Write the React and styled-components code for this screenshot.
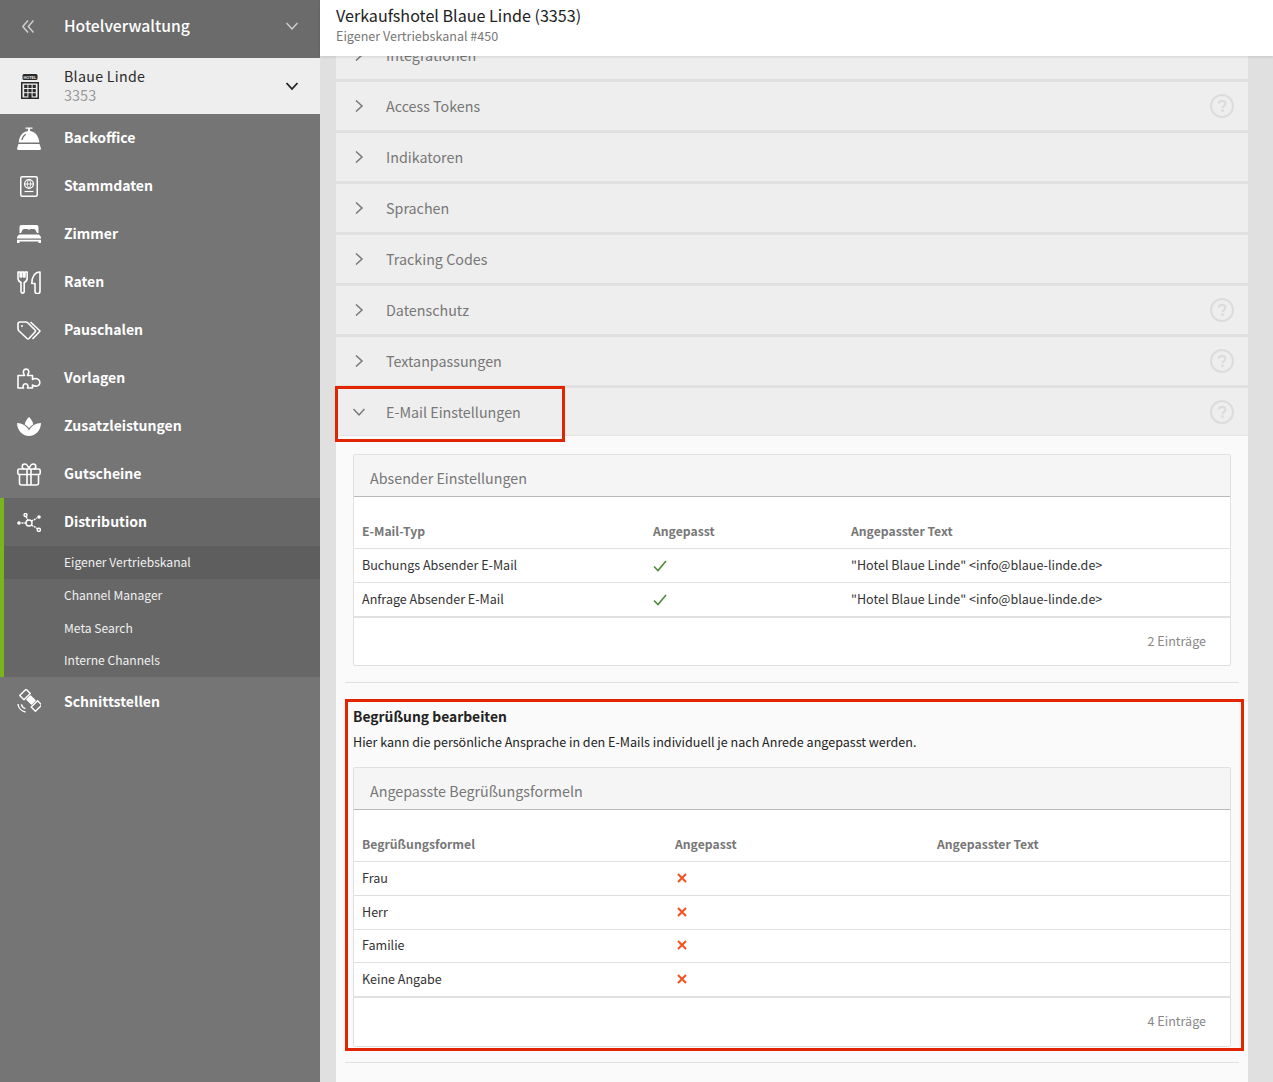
import React from "react";
import styled, { createGlobalStyle } from "styled-components";

const FONT = `"Noto Sans CJK SC", "Noto Sans", sans-serif`;

const Global = createGlobalStyle`
  html, body { margin: 0; padding: 0; height: 100%; overflow: hidden; }
  body { font-family: ${FONT}; background: #e0e0e0; }
  * { box-sizing: border-box; }
`;

const Page = styled.div`
  position: relative;
  display: flex;
  width: 1273px;
  height: 1082px;
  overflow: hidden;
`;

/* ---------- sidebar ---------- */
const Sidebar = styled.aside`
  flex: 0 0 320px;
  background: #757575;
  color: #fff;
  display: flex;
  flex-direction: column;
`;
const TopBar = styled.div`
  height: 58px;
  background: #6b6b6b;
  display: flex;
  align-items: center;
  padding-bottom: 6px;
`;
const TopTitle = styled.div`
  flex: 1;
  font-size: 15.7px;
  font-weight: 500;
  color: #fff;
  padding-bottom: 2px;
`;
const IconSlot = styled.div`
  flex: 0 0 ${(p) => p.$w || 64}px;
  display: flex;
  justify-content: flex-start;
  padding-left: ${(p) => p.$pl ?? 17}px;
  align-items: center;
`;
const HotelRow = styled.div`
  height: 56px;
  background: #eeeeee;
  display: flex;
  align-items: center;
  color: #222;
`;
const HotelText = styled.div`
  flex: 1;
  display: flex;
  flex-direction: column;
  padding-bottom: 2px;
`;
const HotelName = styled.div`
  font-size: 14.2px;
  line-height: 19px;
  letter-spacing: 0.3px;
  color: #2a2a2a;
`;
const HotelId = styled.div`
  font-size: 14.5px;
  line-height: 18px;
  color: #9a9a9a;
`;
const TailIcon = styled.div`
  flex: 0 0 42px;
  display: flex;
  padding-left: 8px;
`;
const NavItem = styled.div`
  height: 48px;
  display: flex;
  align-items: center;
  font-size: 14px;
  font-weight: 700;
  color: #fff;
`;
const NavLabel = styled.span`
  padding-bottom: ${(p) => (p.$flat ? 0 : 2)}px;
`;
const Group = styled.div`
  background: #676767;
  border-left: 4px solid #7ab51d;
`;
const SubItem = styled.div`
  height: ${(p) => (p.$h ? p.$h : 33)}px;
  padding-left: 60px;
  padding-bottom: 3px;
  display: flex;
  align-items: center;
  font-size: 12.1px;
  color: #f0f0f0;
  background: ${(p) => (p.$active ? "#5e5e5e" : "transparent")};
`;

/* ---------- main ---------- */
const Main = styled.main`
  flex: 1;
  min-width: 0;
  display: flex;
  flex-direction: column;
  background: #e0e0e0;
`;
const Header = styled.header`
  position: relative;
  z-index: 2;
  flex: 0 0 56px;
  background: #fff;
  padding: 4px 16px 0;
  box-shadow: 0 1px 3px rgba(0, 0, 0, 0.12);
`;
const HeaderTitle = styled.div`
  font-size: 16.1px;
  line-height: 22px;
  color: #222;
`;
const HeaderSub = styled.div`
  font-size: 12.55px;
  line-height: 18px;
  margin-top: 1px;
  color: #777;
`;
const Scroller = styled.div`
  flex: 1;
  overflow: hidden;
  padding: 0 25px 0 16px;
`;
const Accordion = styled.div`
  display: flex;
  flex-direction: column;
  gap: 3px;
  margin-top: -25px;
`;
const Row = styled.div`
  height: 48px;
  background: #eeeeee;
  display: flex;
  align-items: center;
  color: #777;
  font-size: 14.3px;
  padding: 0 14px 0 17px;
  border-bottom: ${(p) => (p.$open ? "1px solid #e4e4e4" : "none")};
`;
const RowArrow = styled.div`
  flex: 0 0 33px;
  display: flex;
  align-items: center;
`;
const RowLabel = styled.div`
  flex: 1;
  padding-bottom: ${(p) => (p.$open ? 0 : 2)}px;
`;
const Body = styled.div`
  margin-top: -3px;
  background: #fafafa;
  padding: 18px 9px 0;
  height: 700px;
`;
const Card = styled.section`
  margin: 0 8px;
  background: #fff;
  border: 1px solid #e0e0e0;
  border-radius: 2px;
`;
const CardHead = styled.div`
  height: 42px;
  background: #f5f5f5;
  border-bottom: 1px solid #b8b8b8;
  display: flex;
  align-items: center;
  padding: 3px 16px 0;
  font-size: 14.3px;
  color: #777;
`;
const GridRow = styled.div`
  display: grid;
  grid-template-columns: ${(p) => p.$cols};
  align-items: center;
  height: 33.75px;
  padding-left: 8px;
  font-size: 12.55px;
  color: #333;
  border-bottom: 1px solid #e0e0e0;
`;
const HeadRow = styled(GridRow)`
  height: 52px;
  padding-top: 18px;
  font-size: 12.2px;
  font-weight: 600;
  color: #777;
`;
const Cell = styled.span`
  display: block;
  padding-bottom: 2px;
`;
const IconCell = styled.span`
  display: flex;
  align-items: center;
  padding-top: ${(p) => p.$top || 0}px;
  padding-bottom: ${(p) => p.$bottom || 0}px;
  padding-left: ${(p) => p.$left || 0}px;
`;
const CardFoot = styled.div`
  height: 49.5px;
  border-top: 2px solid #e0e0e0;
  margin-top: -1px;
  display: flex;
  align-items: center;
  justify-content: flex-end;
  padding: 0 24px 2px 0;
  font-size: 12.55px;
  color: #888;
`;
const Divider = styled.hr`
  border: 0;
  border-top: 1px solid #e0e0e0;
  margin: 0;
  margin-top: ${(p) => p.$mt}px;
  width: 894px;
`;
const SubTitle = styled.h3`
  margin: 23px 0 0 8px;
  font-size: 13.85px;
  line-height: 20px;
  font-weight: 700;
  color: #222;
`;
const Paragraph = styled.p`
  margin: 6px 0 15px 8px;
  font-size: 12.55px;
  line-height: 20px;
  color: #222;
`;
const RedBox = styled.div`
  position: absolute;
  left: ${(p) => p.$x}px;
  top: ${(p) => p.$y}px;
  width: ${(p) => p.$w}px;
  height: ${(p) => p.$h}px;
  border: 3px solid #e32400;
  pointer-events: none;
`;

/* ---------- icons ---------- */
const Chevron = ({ dir = "right", color = "#777", size = 12, w = 1.5 }) => (
  <svg width={size} height={size} viewBox="0 0 12 12" fill="none" stroke={color} strokeWidth={w}>
    {dir === "right" ? <path d="M3 0.5 L9 6 L3 11.5" /> : <path d="M0.5 3 L6 9 L11.5 3" />}
  </svg>
);
const Doubles = () => (
  <svg width="12" height="13" viewBox="0 0 12 13" fill="none" stroke="#cfcfcf" strokeWidth="1.5">
    <path d="M6 0.5 L0.8 6.5 L6 12.5" />
    <path d="M11.5 0.5 L6.3 6.5 L11.5 12.5" />
  </svg>
);
const Help = () => (
  <svg width="24" height="24" viewBox="0 0 24 24" fill="none">
    <circle cx="12" cy="12" r="11" stroke="#dcdcdc" strokeWidth="2" />
    <path d="M8.6 9.6 C8.8 7.6 10.2 6.8 12 6.8 C14 6.8 15.4 8 15.4 9.7 C15.4 11.8 12.6 11.9 12.6 14" stroke="#dcdcdc" strokeWidth="2.2" />
    <rect x="11.2" y="15.3" width="2.6" height="2.6" fill="#dcdcdc" />
  </svg>
);
const Check = () => (
  <svg width="14" height="12" viewBox="0 0 14 12" fill="none" stroke="#4c8b3c" strokeWidth="1.6">
    <path d="M1 6.5 L5 10.5 L13 1" />
  </svg>
);
const Cross = () => (
  <svg width="10" height="10" viewBox="0 0 10 10" fill="none" stroke="#f4511e" strokeWidth="2">
    <path d="M1 1 L9 9 M9 1 L1 9" />
  </svg>
);
const HotelIcon = () => (
  <svg width="18" height="25" viewBox="0 0 18 25">
    <rect x="1.5" y="0" width="15" height="6" rx="1.5" fill="#2a2a2a" />
    <text x="9" y="4.6" fontSize="3.8" fontWeight="700" fill="#eee" textAnchor="middle" fontFamily="Liberation Sans, sans-serif">HOTEL</text>
    <rect x="0.75" y="8.75" width="16.5" height="15.5" fill="#eee" stroke="#2a2a2a" strokeWidth="1.5" />
    {[0, 1, 2].map((r) =>
      [0, 1, 2].map((c) =>
        r === 2 && c === 1 ? null : (
          <rect key={`${r}${c}`} x={3.2 + c * 4.2} y={10.8 + r * 4.2} width="3.2" height="3.2" fill="#2a2a2a" />
        )
      )
    )}
    <rect x="7.4" y="19.2" width="3.2" height="5" fill="#2a2a2a" />
  </svg>
);
const Bell = () => (
  <svg width="24" height="23" viewBox="0 0 24 23" fill="#fff">
    <path d="M8.5 0.5 H15.5 V1.8 H13 V4 C18.5 4.6 22 9.5 22.3 15.5 H1.7 C2 9.5 5.5 4.6 11 4 V1.8 H8.5 Z" />
    <path d="M5 13 C5.4 10.5 6.8 8.5 8.8 7.3" fill="none" stroke="#757575" strokeWidth="1.3" />
    <path d="M1.5 17 H22.5 L24 21.5 Q24 23 22.5 23 H1.5 Q0 23 0 21.5 Z" />
  </svg>
);
const Passport = () => (
  <svg width="18" height="21" viewBox="0 0 18 21" fill="none" stroke="#fff">
    <rect x="0.75" y="0.75" width="16.5" height="19.5" rx="1.5" strokeWidth="1.5" />
    <circle cx="9" cy="8" r="4.4" strokeWidth="1.3" />
    <path d="M4.6 8 H13.4 M9 3.6 C6.8 6 6.8 10 9 12.4 C11.2 10 11.2 6 9 3.6" strokeWidth="0.9" />
    <path d="M4.5 15.5 H13.5" strokeWidth="1.2" />
  </svg>
);
const Bed = () => (
  <svg width="24" height="18" viewBox="0 0 24 18" fill="#fff">
    <path d="M2.5 8 V2 Q2.5 0 4.5 0 H19.5 Q21.5 0 21.5 2 V8 H20 L18.5 5 Q18 4 16.5 4 H14 Q12.7 4 12 5 Q11.3 4 10 4 H7.5 Q6 4 5.5 5 L4 8 Z" />
    <path d="M2 9.5 H22 L24 12 V13.5 H0 V12 Z" />
    <path d="M0 14.8 H24 V18 H21.5 V16.5 H2.5 V18 H0 Z" />
  </svg>
);
const Cutlery = () => (
  <svg width="24" height="23" viewBox="0 0 24 23" fill="none" stroke="#fff" strokeWidth="1.6" strokeLinejoin="round">
    <path d="M1 1 V7 C1 9.5 2.5 11 4 11.5 V20.5 A1.6 1.6 0 0 0 7.2 20.5 V11.5 C8.7 11 10.2 9.5 10.2 7 V1 H8 V6 H6.6 V1 H4.6 V6 H3.2 V1 Z" />
    <path d="M23 1 C18 1 14.8 5.5 14.8 12.5 H18 V20.2 A2.5 2.5 0 0 0 23 20.2 Z" />
  </svg>
);
const Tags = () => (
  <svg width="24" height="19" viewBox="0 0 24 19" fill="none" stroke="#fff" strokeWidth="1.6" strokeLinejoin="round">
    <path d="M1 3 Q1 1 3 1 H9 Q10 1 11 2 L18 9 Q19 10 18 11 L12 17.5 Q11 18.5 10 17.5 L2 10 Q1 9 1 8 Z" />
    <circle cx="5" cy="5" r="1" fill="#fff" stroke="none" />
    <path d="M13.5 1 L22.5 9.5 Q23.2 10 22.5 10.8 L15.5 18" />
  </svg>
);
const Puzzle = () => (
  <svg width="24" height="21" viewBox="0 0 24 21" fill="none" stroke="#fff" strokeWidth="1.6" strokeLinejoin="round">
    <path d="M1 7.5 H7.5 C7 6 5.8 5 6.5 3 C7.2 0.5 11 0.5 11.7 3 C12.2 5 11 6 10.5 7.5 H15.5 V11.5 C17 10.6 19 10 21 11.2 C23.5 12.8 23.5 16.2 21 17.6 C19 18.6 17 18 15.5 17 V20 H10.5 C11.5 18.5 10.8 15.8 8.6 15.8 C6.2 15.8 5.4 18.5 6.5 20 H1 Z" />
  </svg>
);
const Lotus = () => (
  <svg width="24" height="19" viewBox="0 0 24 19" fill="#fff">
    <path d="M12 0 C14.5 2.5 16 4.8 16.2 7.4 C14.5 8.4 13 9.8 12 11.2 C11 9.8 9.5 8.4 7.8 7.4 C8 4.8 9.5 2.5 12 0 Z" />
    <path d="M0 6 C5 6 10 9 12 13.5 C14 9 19 6 24 6 C24 13 18.5 19 12 19 C5.5 19 0 13 0 6 Z" />
  </svg>
);
const Gift = () => (
  <svg width="24" height="23" viewBox="0 0 24 23" fill="none" stroke="#fff" strokeWidth="1.6" strokeLinejoin="round">
    <rect x="0.8" y="6" width="22.4" height="5.5" rx="1.5" />
    <path d="M2.5 11.5 V20 Q2.5 22 4.5 22 H19.5 Q21.5 22 21.5 20 V11.5" />
    <path d="M10 6 V22 M14 6 V22" />
    <path d="M12 6 C11 2.5 9.5 1 7.5 1 C4.5 1 4.5 6 7.5 6 M12 6 C13 2.5 14.5 1 16.5 1 C19.5 1 19.5 6 16.5 6" />
  </svg>
);
const Network = () => (
  <svg width="24" height="19" viewBox="0 0 24 19" fill="none" stroke="#fff" strokeWidth="1.4">
    <circle cx="12" cy="10" r="3" />
    <circle cx="2" cy="10" r="1.8" fill="#fff" stroke="none" />
    <circle cx="8.5" cy="2" r="1.5" />
    <circle cx="22" cy="4" r="1.8" fill="#fff" stroke="none" />
    <circle cx="21.8" cy="16.8" r="1.6" />
    <path d="M4.5 10 H9 M9.2 3.6 L10.8 7.2 M14.4 8.2 L20 5 M14.4 12 L20.4 15.6" strokeDasharray="2 0.8" />
  </svg>
);
const Satellite = () => (
  <svg width="24" height="24" viewBox="0 0 24 24" fill="none" stroke="#fff" strokeWidth="1.4" strokeLinejoin="round">
    <rect x="5" y="1" width="6" height="9" transform="rotate(45 8 5.5)" />
    <rect x="10.75" y="8.5" width="6.5" height="5" transform="rotate(45 14 11)" fill="#fff" />
    <rect x="16.5" y="12.5" width="6" height="9" transform="rotate(45 19.5 17)" />
    <path d="M1 15 C1.4 18.8 4.5 22.2 8.5 23 M4.4 15.4 C4.9 17.6 6.2 19 8.4 19.6" />
  </svg>
);

const COLS1 = "291px 198px 1fr";
const COLS2 = "313px 262px 1fr";

const sections = [
  { label: "Integrationen" },
  { label: "Access Tokens", help: true },
  { label: "Indikatoren" },
  { label: "Sprachen" },
  { label: "Tracking Codes" },
  { label: "Datenschutz", help: true },
  { label: "Textanpassungen", help: true },
];

const nav = [
  { label: "Backoffice", icon: <Bell /> },
  { label: "Stammdaten", icon: <Passport />, pl: 20 },
  { label: "Zimmer", icon: <Bed /> },
  { label: "Raten", icon: <Cutlery /> },
  { label: "Pauschalen", icon: <Tags /> },
  { label: "Vorlagen", icon: <Puzzle /> },
  { label: "Zusatzleistungen", icon: <Lotus /> },
  { label: "Gutscheine", icon: <Gift /> },
];

const senders = [
  ["Buchungs Absender E-Mail", '"Hotel Blaue Linde" <info@blaue-linde.de>'],
  ["Anfrage Absender E-Mail", '"Hotel Blaue Linde" <info@blaue-linde.de>'],
];
const greetings = ["Frau", "Herr", "Familie", "Keine Angabe"];

export default function App() {
  return (
    <Page>
      <Global />
      <Sidebar>
        <TopBar>
          <IconSlot $pl={22}><Doubles /></IconSlot>
          <TopTitle>Hotelverwaltung</TopTitle>
          <TailIcon><Chevron dir="down" color="#cfcfcf" size={12} /></TailIcon>
        </TopBar>
        <HotelRow>
          <IconSlot $pl={21}><HotelIcon /></IconSlot>
          <HotelText>
            <HotelName>Blaue Linde</HotelName>
            <HotelId>3353</HotelId>
          </HotelText>
          <TailIcon><Chevron dir="down" color="#222" size={12} w={1.8} /></TailIcon>
        </HotelRow>
        {nav.map((n) => (
          <NavItem key={n.label}>
            <IconSlot $pl={n.pl}>{n.icon}</IconSlot>
            <NavLabel>{n.label}</NavLabel>
          </NavItem>
        ))}
        <Group>
          <NavItem>
            <IconSlot $w={60} $pl={13}><Network /></IconSlot>
            <NavLabel>Distribution</NavLabel>
          </NavItem>
          <SubItem $active>Eigener Vertriebskanal</SubItem>
          <SubItem>Channel Manager</SubItem>
          <SubItem>Meta Search</SubItem>
          <SubItem $h={32}>Interne Channels</SubItem>
        </Group>
        <NavItem>
          <IconSlot><Satellite /></IconSlot>
          <NavLabel $flat>Schnittstellen</NavLabel>
        </NavItem>
      </Sidebar>

      <Main>
        <Header>
          <HeaderTitle>Verkaufshotel Blaue Linde (3353)</HeaderTitle>
          <HeaderSub>Eigener Vertriebskanal #450</HeaderSub>
        </Header>
        <Scroller>
          <Accordion>
            {sections.map((s) => (
              <Row key={s.label}>
                <RowArrow><Chevron /></RowArrow>
                <RowLabel>{s.label}</RowLabel>
                {s.help && <Help />}
              </Row>
            ))}
            <Row $open>
              <RowArrow><Chevron dir="down" /></RowArrow>
              <RowLabel $open>E-Mail Einstellungen</RowLabel>
              <Help />
            </Row>
            <Body>
              <Card>
                <CardHead>Absender Einstellungen</CardHead>
                <HeadRow $cols={COLS1}>
                  <Cell>E-Mail-Typ</Cell>
                  <Cell>Angepasst</Cell>
                  <Cell>Angepasster Text</Cell>
                </HeadRow>
                {senders.map(([a, b]) => (
                  <GridRow key={a} $cols={COLS1}>
                    <Cell>{a}</Cell>
                    <IconCell $top={1}><Check /></IconCell>
                    <Cell>{b}</Cell>
                  </GridRow>
                ))}
                <CardFoot>2 Einträge</CardFoot>
              </Card>
              <Divider $mt={16} />
              <SubTitle>Begrüßung bearbeiten</SubTitle>
              <Paragraph>Hier kann die persönliche Ansprache in den E-Mails individuell je nach Anrede angepasst werden.</Paragraph>
              <Card>
                <CardHead>Angepasste Begrüßungsformeln</CardHead>
                <HeadRow $cols={COLS2}>
                  <Cell>Begrüßungsformel</Cell>
                  <Cell>Angepasst</Cell>
                  <Cell>Angepasster Text</Cell>
                </HeadRow>
                {greetings.map((g) => (
                  <GridRow key={g} $cols={COLS2}>
                    <Cell>{g}</Cell>
                    <IconCell $left={2} $bottom={1}><Cross /></IconCell>
                    <Cell />
                  </GridRow>
                ))}
                <CardFoot>4 Einträge</CardFoot>
              </Card>
              <Divider $mt={15} />
            </Body>
          </Accordion>
        </Scroller>
      </Main>

      <RedBox $x={335} $y={386} $w={230} $h={56} />
      <RedBox $x={345} $y={699} $w={899} $h={352} />
    </Page>
  );
}
